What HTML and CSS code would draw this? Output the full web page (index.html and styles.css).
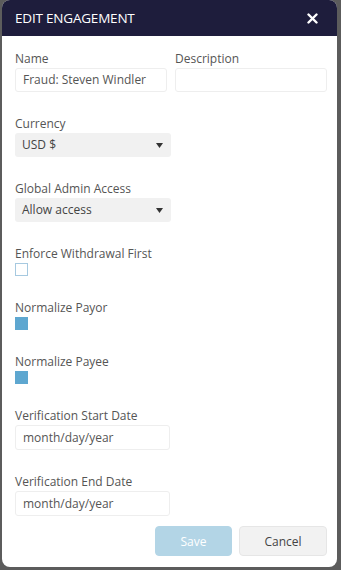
FILE: index.html
```html
<!DOCTYPE html>
<html>
<head>
<meta charset="utf-8">
<link rel="stylesheet" href="styles.css">
</head>
<body>
<div class="modal">
  <div class="header">
    <span class="title">EDIT ENGAGEMENT</span>
    <svg class="close" width="11" height="11" viewBox="0 0 11 11"><path d="M1.5 1.5 L9.5 9.5 M9.5 1.5 L1.5 9.5" stroke="#fff" stroke-width="2.4" stroke-linecap="round"/></svg>
  </div>
  <div class="content">
    <div class="row">
      <div class="field half">
        <label class="label">Name</label>
        <div class="input">Fraud: Steven Windler</div>
      </div>
      <div class="field half">
        <label class="label">Description</label>
        <div class="input"></div>
      </div>
    </div>
    <div class="field">
      <label class="label">Currency</label>
      <div class="select"><span>USD $</span><svg class="arrow" width="7" height="5" viewBox="0 0 7 5"><path d="M0 0 H7 L3.5 5 Z" fill="#333"/></svg></div>
    </div>
    <div class="field">
      <label class="label">Global Admin Access</label>
      <div class="select"><span>Allow access</span><svg class="arrow" width="7" height="5" viewBox="0 0 7 5"><path d="M0 0 H7 L3.5 5 Z" fill="#333"/></svg></div>
    </div>
    <div class="field">
      <label class="label">Enforce Withdrawal First</label>
      <div class="check"></div>
    </div>
    <div class="field">
      <label class="label">Normalize Payor</label>
      <div class="check on"></div>
    </div>
    <div class="field">
      <label class="label">Normalize Payee</label>
      <div class="check on"></div>
    </div>
    <div class="field">
      <label class="label">Verification Start Date</label>
      <div class="input date">month/day/year</div>
    </div>
    <div class="field">
      <label class="label">Verification End Date</label>
      <div class="input date">month/day/year</div>
    </div>
    <div class="actions">
      <button class="btn save">Save</button>
      <button class="btn cancel">Cancel</button>
    </div>
  </div>
</div>
</body>
</html>
```
FILE: styles.css
```css
html, body {
  margin: 0;
  padding: 0;
}
body {
  background: #5c5c5c;
  font-family: "Open Sans", "Noto Sans", sans-serif;
  width: 341px;
  height: 570px;
  overflow: hidden;
}
.modal {
  margin: 0 0 0 2px;
  width: 335px;
  height: 567px;
  background: #fff;
  border-radius: 8px;
  overflow: hidden;
}
.header {
  height: 36px;
  background: #1e1d3c;
  display: flex;
  align-items: center;
  justify-content: space-between;
  padding: 0 19px 0 13px;
}
.title {
  color: #fff;
  font-size: 13.5px;
  letter-spacing: -0.2px;
}
.close {
  display: block;
}
.content {
  padding: 15px 10px 0 13px;
  display: flex;
  flex-direction: column;
  gap: 24px;
}
.row {
  display: flex;
  gap: 8px;
}
.field {
  display: flex;
  flex-direction: column;
}
.half {
  width: 152px;
}
.label {
  font-size: 12px;
  line-height: 16px;
  color: #555;
  margin-bottom: 1px;
}
.input {
  height: 22px;
  border: 1px solid #eeeeee;
  border-radius: 3px;
  font-size: 12px;
  line-height: 22px;
  color: #555;
  padding: 0 7px;
  box-sizing: content-box;
}
.half .input {
  width: 136px;
}
.date {
  width: 139px;
  height: 23px;
  line-height: 23px;
}
.select {
  width: 141px;
  height: 24px;
  background: #f1f1f1;
  border-radius: 3px;
  font-size: 12px;
  line-height: 24px;
  color: #444;
  padding: 0 8px 0 7px;
  display: flex;
  justify-content: space-between;
  align-items: center;
}
.arrow {
  display: block;
}
.check {
  width: 11px;
  height: 11px;
  border: 1px solid #a6c9e0;
}
.check.on {
  background: #5ea7d0;
  border-color: #5ea7d0;
}
.actions {
  display: flex;
  justify-content: flex-end;
  gap: 7px;
  margin-top: -14px;
}
.btn {
  font-family: "Open Sans", "Noto Sans", sans-serif;
  font-size: 12px;
  height: 30px;
  border-radius: 4px;
  cursor: pointer;
}
.save {
  width: 77px;
  background: #b3d5e6;
  border: 1px solid #b3d5e6;
  color: #fff;
}
.cancel {
  width: 88px;
  background: #f2f2f2;
  border: 1px solid #e6e6e6;
  color: #444;
}
```
